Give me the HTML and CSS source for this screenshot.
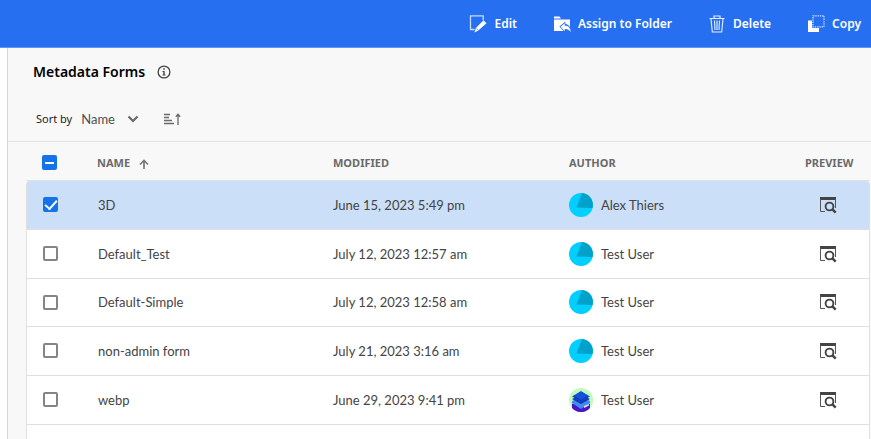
FILE: index.html
```
<!DOCTYPE html>
<html lang="en">
<head>
<meta charset="utf-8">
<title>Metadata Forms</title>
<link rel="stylesheet" href="styles.css">
</head>
<body>
<svg class="defs" aria-hidden="true">
  <symbol id="preview" viewBox="0 0 18 18">
    <path d="M1 1h16v3H1z" fill="#444"/>
    <path d="M1.500 3v12.500H6M16.500 3v9" fill="none" stroke="#555"/>
    <circle cx="10.500" cy="10.500" r="3.900" fill="none" stroke="#444" stroke-width="1.900"/>
    <path d="M13.200 13.200l3.500 3.500" stroke="#444" stroke-width="2.500"/>
  </symbol>
  <symbol id="avatar" viewBox="0 0 24 24">
    <circle cx="12" cy="12" r="12" fill="#00cfff"/>
    <path d="M13 0A12 12 0 0 1 23.500 15L7.500 14.500z" fill="#00a2cc"/>
  </symbol>
  <symbol id="avatar-layers" viewBox="0 0 24 24">
    <circle cx="12" cy="12" r="12" fill="#bdfcbd"/>
    <path d="M3 16l9-3 9 3v4a12 12 0 0 1-18 0z" fill="#4a16c4"/>
    <path d="M3 13l9-4 9 4v2l-9 6-9-6z" fill="#3f8cf5"/>
    <path d="M3 11l9-4 9 4-9 5z" fill="#1735b5"/>
    <path d="M3 8.500l9-5.500 9 5.500-9 5.500z" fill="#1450d8"/>
    <path d="M5 8.500l7 4 7-4" fill="none" stroke="#0d35a8"/>
    <path d="M15 18l5-2v1.500l-5 2.500z" fill="#dfe4ff"/>
  </symbol>
</svg>

<header class="actions">
  <button type="button" class="action">
    <svg viewBox="0 0 18 18"><path d="M5.500 14.500H1.500V.8h12.700V5" fill="none" stroke="#c9dcff" stroke-width="1.300"/><path d="M14.500 5.200l3 3-8.200 7.300-3.800 1.900 1.400-4.300z" fill="#fff"/><path d="M7.500 13.700l1.800 1.800" stroke="#266ff0" stroke-width=".8"/></svg>
    Edit
  </button>
  <button type="button" class="action">
    <svg viewBox="0 0 18 18"><path d="M1 1.500h5.500l1.500 2H1z" fill="#fff"/><path d="M1 4.500h16v7.800c-1-2-2.600-3-4.600-3.200V6.500l-6 5 4 4.500H1z" fill="#fff"/><path d="M7.500 11.700l4.200-3.400v2.200c3.800.2 5.800 2.400 6 6.500-1.400-2-3.200-3-6-2.900v2.100z" fill="#fff"/></svg>
    Assign to Folder
  </button>
  <button type="button" class="action">
    <svg viewBox="0 0 18 18" fill="none" stroke="#e6efff"><path d="M1.500 3.500h15M6 3V1h6v2" stroke-width="1.200"/><path d="M3 4l1.300 13h9.400L15 4M6.500 5.500l.5 9.500M9 5.500V15M11.500 5.500L11 15" stroke-width="1.100"/></svg>
    Delete
  </button>
  <button type="button" class="action">
    <svg viewBox="0 0 18 18"><path d="M1 5.500h4v7.500h7v4H1z" fill="#fff"/><path d="M6 .8h11v11H6z" fill="none" stroke="#dce8ff" stroke-width="1.200" stroke-dasharray="1.300 1"/></svg>
    Copy
  </button>
</header>

<main class="panel">
  <div class="title-row">
    <h1>Metadata Forms</h1>
    <button type="button" class="icon-button" aria-label="Information">
      <svg viewBox="0 0 14 14"><circle cx="7" cy="7" r="5.900" fill="none" stroke="#444" stroke-width="1.300"/><path d="M6.200 3.200h1.600v1.600H6.200zM5.500 6h2.200v3.500h.8v1h-3v-1h.8V7h-.8z" fill="#444"/></svg>
    </button>
  </div>

  <div class="sort-row">
    <label for="sort">Sort by</label>
    <div class="picker">
      <select id="sort"><option>Name</option></select>
      <svg viewBox="0 0 12 8"><path d="M1.500 1.500L6 6l4.500-4.500" fill="none" stroke="#666" stroke-width="2"/></svg>
    </div>
    <button type="button" class="icon-button order" aria-label="Sort order">
      <svg viewBox="0 0 18 12"><path d="M1 1.500h6M1 4.500h5M1 7.500h8M1 10.500h10" stroke="#6a6a6a" stroke-width="1.700"/><path d="M15 12V2M12.800 3.700L15 1.200l2.200 2.500" fill="none" stroke="#6a6a6a" stroke-width="1.300"/></svg>
    </button>
  </div>

  <div class="list">
    <table>
      <colgroup><col class="col-check"><col><col><col><col class="col-preview"></colgroup>
      <thead>
        <tr>
          <th class="check"><input type="checkbox" class="mixed" aria-label="Select all"></th>
          <th scope="col">Name <svg class="arrow" viewBox="0 0 10 10"><path d="M5 10V1.500M1 5.500l4-4 4 4" fill="none" stroke="#777" stroke-width="1.700"/></svg></th>
          <th scope="col">Modified</th>
          <th scope="col">Author</th>
          <th scope="col">Preview</th>
        </tr>
      </thead>
      <tbody>
        <tr class="selected">
          <td class="check"><input type="checkbox" checked aria-label="Select 3D"></td>
          <td class="name">3D</td>
          <td>June 15, 2023 5:49 pm</td>
          <td><div class="author"><svg><use href="#avatar"/></svg>Alex Thiers</div></td>
          <td><button type="button" class="preview" aria-label="Preview 3D"><svg><use href="#preview"/></svg></button></td>
        </tr>
        <tr>
          <td class="check"><input type="checkbox" aria-label="Select Default_Test"></td>
          <td class="name">Default_Test</td>
          <td>July 12, 2023 12:57 am</td>
          <td><div class="author"><svg><use href="#avatar"/></svg>Test User</div></td>
          <td><button type="button" class="preview" aria-label="Preview Default_Test"><svg><use href="#preview"/></svg></button></td>
        </tr>
        <tr>
          <td class="check"><input type="checkbox" aria-label="Select Default-Simple"></td>
          <td class="name">Default-Simple</td>
          <td>July 12, 2023 12:58 am</td>
          <td><div class="author"><svg><use href="#avatar"/></svg>Test User</div></td>
          <td><button type="button" class="preview" aria-label="Preview Default-Simple"><svg><use href="#preview"/></svg></button></td>
        </tr>
        <tr>
          <td class="check"><input type="checkbox" aria-label="Select non-admin form"></td>
          <td class="name">non-admin form</td>
          <td>July 21, 2023 3:16 am</td>
          <td><div class="author"><svg><use href="#avatar"/></svg>Test User</div></td>
          <td><button type="button" class="preview" aria-label="Preview non-admin form"><svg><use href="#preview"/></svg></button></td>
        </tr>
        <tr>
          <td class="check"><input type="checkbox" aria-label="Select webp"></td>
          <td class="name">webp</td>
          <td>June 29, 2023 9:41 pm</td>
          <td><div class="author"><svg><use href="#avatar-layers"/></svg>Test User</div></td>
          <td><button type="button" class="preview" aria-label="Preview webp"><svg><use href="#preview"/></svg></button></td>
        </tr>
      </tbody>
    </table>
    <div class="rest"></div>
  </div>
</main>
</body>
</html>
```
FILE: styles.css
```
* {
  box-sizing: border-box;
}

body {
  margin: 0;
  height: 100vh;
  display: flex;
  flex-direction: column;
  overflow: hidden;
  background: #fff;
  color: #444;
  font: 13px/20px "Noto Sans", sans-serif;
}

button {
  border: 0;
  padding: 0;
  background: none;
  color: inherit;
  font: inherit;
}

svg {
  display: block;
}

.defs {
  position: absolute;
  width: 0;
  height: 0;
}

.actions {
  flex: none;
  display: flex;
  justify-content: flex-end;
  align-items: center;
  gap: 36px;
  height: 48px;
  padding: 0 10px;
  background: #266ff0;
  border-bottom: 1px solid #5f95f5;
}

.action {
  display: flex;
  align-items: center;
  gap: 7px;
  color: #fff;
  font-size: 12px;
  font-weight: 600;
  white-space: nowrap;
}

.action svg {
  width: 18px;
  height: 18px;
}

.panel {
  flex: 1;
  min-height: 0;
  display: flex;
  flex-direction: column;
  margin-left: 7px;
  border-left: 1px solid #d5d5d5;
  background: #f8f8f8;
}

.title-row {
  display: flex;
  align-items: center;
  gap: 12px;
  height: 48px;
  padding-left: 25px;
}

h1 {
  margin: 0;
  color: #000;
  font-size: 14px;
  font-weight: 600;
}

.icon-button svg {
  width: 14px;
  height: 14px;
}

.sort-row {
  display: flex;
  align-items: center;
  height: 46px;
  padding-left: 28px;
  border-bottom: 1px solid #e3e3e3;
}

.sort-row label {
  color: #222;
  font-size: 11px;
}

.picker {
  display: flex;
  align-items: center;
  margin-left: 9px;
}

.picker select {
  appearance: none;
  width: 60px;
  margin-right: -14px;
  border: 0;
  padding: 0;
  background: none;
  color: #505050;
  font-family: Lato, sans-serif;
  font-size: 13px;
}

.picker svg {
  width: 12px;
  height: 8px;
  pointer-events: none;
}

.order {
  margin-left: 24px;
}

.order svg {
  width: 18px;
  height: 12px;
}

.list {
  flex: 1;
  min-height: 0;
  display: flex;
  flex-direction: column;
  margin: 0 1px 0 18px;
}

table {
  width: 100%;
  table-layout: fixed;
  border-collapse: separate;
  border-spacing: 0;
}

.col-check {
  width: 56px;
}

.col-preview {
  width: 80px;
}

th {
  height: 39px;
  padding: 3px 0 0 15px;
  border-bottom: 1px solid #e0e0e0;
  color: #6a6a6a;
  font-size: 11px;
  font-weight: 700;
  text-align: left;
  text-transform: uppercase;
}

td {
  height: 49px;
  padding: 0 0 1px 15px;
  border-bottom: 1px solid #e0e0e0;
  background: #fff;
  font-family: Lato, sans-serif;
}

th.check,
td.check,
.name {
  padding-left: 16px;
}

tbody tr:nth-child(3) td {
  height: 48px;
}

td:first-child {
  border-left: 1px solid #e0e0e0;
}

td:last-child {
  border-right: 1px solid #e0e0e0;
}

.selected td {
  background: #cbdff8;
}

.selected td:first-child {
  border-top-left-radius: 4px;
}

.selected td:last-child {
  border-top-right-radius: 4px;
}

.arrow {
  display: inline-block;
  width: 10px;
  height: 10px;
  margin-left: 6px;
  vertical-align: -2px;
}

.check input {
  display: block;
  appearance: none;
  width: 15px;
  height: 15px;
  margin: 0;
  border: 2px solid #858585;
  border-radius: 2px;
  background: #fff;
}

.check input:checked,
.check .mixed {
  display: grid;
  place-items: center;
  border-color: #1473e6;
  background: #1473e6;
}

.check input:checked::after {
  content: "";
  width: 10px;
  height: 5px;
  border: solid #fff;
  border-width: 0 0 2px 2px;
  transform: translateY(-1px) rotate(-48deg);
}

.check .mixed::after {
  content: "";
  width: 9px;
  height: 2px;
  background: #fff;
}

.author {
  display: flex;
  align-items: center;
  gap: 8px;
}

.author svg {
  width: 24px;
  height: 24px;
}

.preview {
  display: block;
  margin-left: 14px;
}

.preview svg {
  width: 18px;
  height: 18px;
}

.rest {
  flex: 1;
  border: solid #e0e0e0;
  border-width: 0 1px;
  background: #fff;
}
```
